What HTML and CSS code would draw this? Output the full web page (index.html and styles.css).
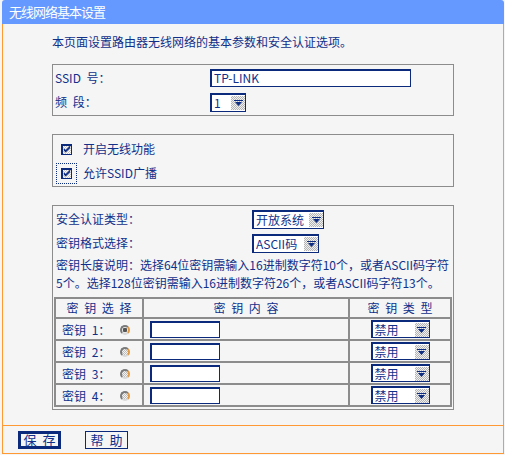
FILE: index.html
```html
<!DOCTYPE html>
<html lang="zh-CN">
<head>
    <meta charset="UTF-8">
    <title>无线网络基本设置</title>
    <link rel="stylesheet" href="styles.css">
</head>
<body>
    <div class="page">
        <div class="title">无线网络基本设置</div>

        <div class="main">
            <p class="intro">本页面设置路由器无线网络的基本参数和安全认证选项。</p>

            <div class="box box-basic">
                <div class="row">
                    <span class="lbl lbl-basic">SSID 号：</span>
                    <span class="field field-ssid">TP-LINK</span>
                </div>
                <div class="row">
                    <span class="lbl lbl-basic">频 段：</span>
                    <span class="sel sel-ch">
                        <span class="sel-val">1</span>
                        <span class="sel-btn"><svg width="9" height="6" viewBox="0 0 9 6"><path d="M0 0h9v1H0zM1 2h7L4.5 6z" fill="#0e2d80"/></svg></span>
                    </span>
                </div>
            </div>

            <div class="box box-switch">
                <div class="check-row">
                    <span class="check"><svg width="9" height="9" viewBox="0 0 9 9"><path d="M1 3l2 2 5-5v3L3 8 1 6z" fill="#0e2d80"/></svg></span>
                    开启无线功能
                </div>
                <div class="check-row">
                    <span class="check check-focus"><svg width="9" height="9" viewBox="0 0 9 9"><path d="M1 3l2 2 5-5v3L3 8 1 6z" fill="#0e2d80"/></svg></span>
                    允许SSID广播
                </div>
            </div>

            <div class="box box-sec">
                <div class="row">
                    <span class="lbl lbl-sec">安全认证类型：</span>
                    <span class="sel sel-auth">
                        <span class="sel-val">开放系统</span>
                        <span class="sel-btn"><svg width="9" height="6" viewBox="0 0 9 6"><path d="M0 0h9v1H0zM1 2h7L4.5 6z" fill="#0e2d80"/></svg></span>
                    </span>
                </div>
                <div class="row">
                    <span class="lbl lbl-sec">密钥格式选择：</span>
                    <span class="sel sel-fmt">
                        <span class="sel-val">ASCII码</span>
                        <span class="sel-btn"><svg width="9" height="6" viewBox="0 0 9 6"><path d="M0 0h9v1H0zM1 2h7L4.5 6z" fill="#0e2d80"/></svg></span>
                    </span>
                </div>
                <p class="note">密钥长度说明：选择64位密钥需输入16进制数字符10个，或者ASCII码字符<br>5个。选择128位密钥需输入16进制数字符26个，或者ASCII码字符13个。</p>

                <table class="keys">
                    <tr class="head">
                        <td class="c1">密 钥 选 择</td>
                        <td class="c2">密 钥 内 容</td>
                        <td class="c3">密 钥 类 型</td>
                    </tr>
                    <tr>
                        <td class="c1"><span class="key-name">密钥 1：</span><span class="radio radio-on"></span></td>
                        <td class="c2"><span class="field field-key"></span></td>
                        <td class="c3"><span class="sel sel-key"><span class="sel-val">禁用</span><span class="sel-btn"><svg width="9" height="6" viewBox="0 0 9 6"><path d="M0 0h9v1H0zM1 2h7L4.5 6z" fill="#0e2d80"/></svg></span></span></td>
                    </tr>
                    <tr>
                        <td class="c1"><span class="key-name">密钥 2：</span><span class="radio"></span></td>
                        <td class="c2"><span class="field field-key"></span></td>
                        <td class="c3"><span class="sel sel-key"><span class="sel-val">禁用</span><span class="sel-btn"><svg width="9" height="6" viewBox="0 0 9 6"><path d="M0 0h9v1H0zM1 2h7L4.5 6z" fill="#0e2d80"/></svg></span></span></td>
                    </tr>
                    <tr>
                        <td class="c1"><span class="key-name">密钥 3：</span><span class="radio"></span></td>
                        <td class="c2"><span class="field field-key"></span></td>
                        <td class="c3"><span class="sel sel-key"><span class="sel-val">禁用</span><span class="sel-btn"><svg width="9" height="6" viewBox="0 0 9 6"><path d="M0 0h9v1H0zM1 2h7L4.5 6z" fill="#0e2d80"/></svg></span></span></td>
                    </tr>
                    <tr>
                        <td class="c1"><span class="key-name">密钥 4：</span><span class="radio"></span></td>
                        <td class="c2"><span class="field field-key"></span></td>
                        <td class="c3"><span class="sel sel-key"><span class="sel-val">禁用</span><span class="sel-btn"><svg width="9" height="6" viewBox="0 0 9 6"><path d="M0 0h9v1H0zM1 2h7L4.5 6z" fill="#0e2d80"/></svg></span></span></td>
                    </tr>
                </table>
            </div>
        </div>

        <div class="actions">
            <button class="btn btn-default">保 存</button>
            <button class="btn">帮 助</button>
        </div>
    </div>
</body>
</html>
```

FILE: styles.css
```css
body {
    margin: 0;
    background-color: #f5f5f5;
    color: #10308a;
    font-family: "Noto Sans CJK SC", sans-serif;
    font-size: 12px;
    line-height: 16px;
    word-spacing: 3px;
}
.page {
    width: 502px;
    margin-left: 2px;
    box-sizing: border-box;
}
.title {
    height: 24px;
    line-height: 24px;
    padding-left: 7px;
    background-color: #6699ff;
    color: #fff;
    font-size: 13px;
    letter-spacing: -1px;
    border-radius: 3px 3px 0 0;
}
.main {
    border-left: 1px solid #ff9933;
    border-right: 1px solid #ff9933;
    padding: 10px 0 15px 49px;
}
.intro {
    margin: 0;
    height: 16px;
}
.box {
    width: 402px;
    box-sizing: border-box;
    border: 1px solid #8c8c8c;
    margin-top: 18px;
}
.box-basic {
    margin-top: 14px;
    padding: 1px 2px;
}
.box-switch {
    padding: 2px 7px 1px;
}
.box-sec {
    padding: 1px 1px 2px;
}
.row {
    display: flex;
    align-items: center;
    height: 24px;
}
.box-sec .row {
    padding-left: 2px;
}
.lbl {
    flex: none;
}
.lbl-basic {
    width: 155px;
}
.lbl-sec {
    width: 196px;
}
.field {
    display: inline-block;
    box-sizing: border-box;
    background-color: #fff;
    border: 1px solid #0c2a7c;
    border-width: 2px 1px 1px 2px;
    line-height: 14px;
}
.field-ssid {
    width: 201px;
    height: 18px;
    padding-left: 2px;
}
.field-key {
    width: 70px;
    height: 17px;
    vertical-align: middle;
}

/* drop-down lists: white field plus the dotted arrow button */
.sel {
    display: inline-flex;
    align-items: center;
    box-sizing: border-box;
    height: 19px;
    background-color: #fff;
    border: 1px solid #0c2a7c;
    border-width: 2px 1px 1px 2px;
    vertical-align: middle;
    text-align: left;
}
.sel-val {
    flex: 1;
    padding-left: 2px;
    line-height: 14px;
    white-space: nowrap;
}
.sel-btn {
    flex: none;
    width: 15px;
    height: 15px;
    display: flex;
    align-items: center;
    justify-content: center;
    box-sizing: border-box;
    border-top: 1px solid #fff;
    border-left: 1px solid #fff;
    background: repeating-conic-gradient(#b4b4b4 0 25%, #f0f0f0 0 50%) 0 0 / 2px 2px;
}
.sel-ch {
    width: 36px;
}
.sel-auth {
    width: 72px;
}
.sel-fmt {
    width: 67px;
}
.sel-key {
    width: 59px;
    height: 18px;
}
.check-row {
    display: flex;
    align-items: center;
    height: 24px;
}
.check {
    flex: none;
    width: 11px;
    height: 11px;
    box-sizing: border-box;
    margin: 0 11px 0 1px;
    display: flex;
    align-items: center;
    justify-content: center;
    border: 1px solid #0c2a7c;
    border-width: 2px 1px 1px 2px;
    background: repeating-conic-gradient(#c8c8c8 0 25%, #fafafa 0 50%) 0 0 / 2px 2px;
}
.check-focus {
    outline: 1px dotted #0c2a7c;
    outline-offset: 4px;
}
.note {
    margin: 1px 0 0;
    padding-left: 2px;
    line-height: 18px;
    white-space: nowrap;
}
.keys {
    width: 398px;
    margin-top: 5px;
    border: 1px solid #8c8c8c;
    border-spacing: 0;
    table-layout: fixed;
}
.keys td {
    border: 1px solid #8c8c8c;
    padding: 0;
}
.keys .head {
    height: 20px;
}
.keys .head td {
    text-align: center;
    word-spacing: 3px;
}
.keys tr {
    height: 22px;
}
.keys .c1 {
    width: 86px;
    padding-left: 6px;
}
.keys .head .c1 {
    padding-left: 0;
}
.keys .c2 {
    width: 204px;
    padding-left: 6px;
}
.keys .head .c2 {
    padding-left: 0;
}
.keys .c3 {
    text-align: center;
}
.key-name {
    display: inline-block;
    width: 58px;
    vertical-align: middle;
}
.radio {
    display: inline-block;
    width: 10px;
    height: 10px;
    box-sizing: border-box;
    border-radius: 50%;
    border: 2px solid #7a7a7a;
    border-right-color: #e39a45;
    border-bottom-color: #d8d8d8;
    background: repeating-conic-gradient(#bcbcbc 0 25%, #f4f4f4 0 50%) 0 0 / 2px 2px;
    vertical-align: middle;
}
.radio-on {
    background: radial-gradient(circle, #555 0 2px, #e8e8e8 2.5px);
}
.actions {
    display: flex;
    gap: 24px;
    height: 29px;
    box-sizing: border-box;
    padding: 5px 0 0 15px;
    border: 1px solid #ff9933;
    border-top-width: 1px;
}
.btn {
    width: 43px;
    height: 18px;
    padding: 0;
    box-sizing: border-box;
    background-color: #f5f5f5;
    color: #10308a;
    border: 1px solid #0c2a7c;
    font-family: "Noto Sans CJK SC", sans-serif;
    font-size: 13px;
    line-height: 14px;
    word-spacing: 3px;
}
.btn-default {
    border-width: 3px;
    line-height: 10px;
}
```
